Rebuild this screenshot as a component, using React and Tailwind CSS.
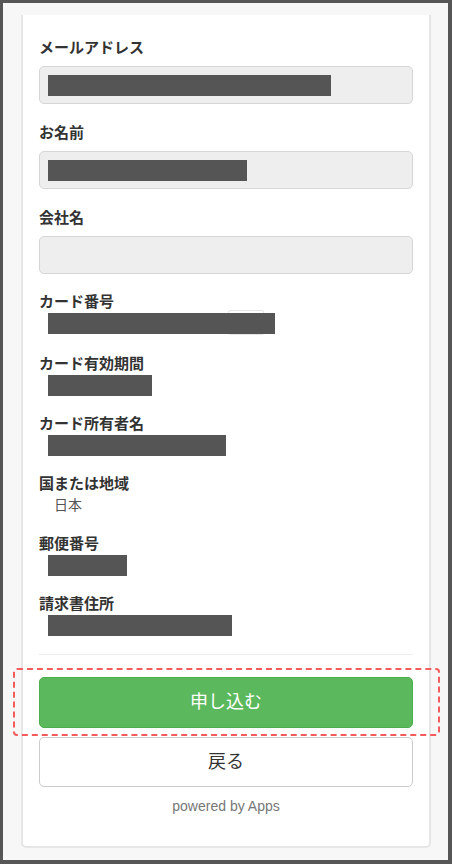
import React from 'react';

const font = { fontFamily: '"Liberation Sans", "Noto Sans CJK JP", sans-serif' };

function Bar({ w }) {
    return <div className="h-[21px] bg-[#555555]" style={{ width: w }} />;
}

function InputField({ label, bar }) {
    return (
        <div className="mb-[19px]">
            <div className="h-5 leading-5 text-[15px] font-bold text-[#333]">{label}</div>
            <div className="mt-2 h-[38px] rounded-[5px] border border-[#d6d6d6] bg-[#eeeeee] flex items-center px-2">
                {bar && <Bar w={bar} />}
            </div>
        </div>
    );
}

function ValueField({ label, bar, text, children, className = 'mb-[18px]' }) {
    return (
        <div className={className}>
            <div className="h-5 leading-5 text-[15px] font-bold text-[#333]">{label}</div>
            <div className="relative h-[22px] pl-[9px] pt-px">
                {children}
                {bar && <div className="relative"><Bar w={bar} /></div>}
                {text && <span className="block pl-[6px] leading-5 text-[14px] text-[#555]">{text}</span>}
            </div>
        </div>
    );
}

export default function App() {
    return (
        <div className="w-[452px] h-[864px] bg-[#f7f7f7] border-[#565656] border-l-[3px] border-t-[3px] border-r-[4px] border-b-[4px] pt-[12px] pl-[18px] pr-[17px]" style={font}>
            <div className="h-[833px] bg-white border-x-2 border-b-2 border-[#e6e6e6] rounded-b-[5px] pt-[23px] px-[16px]">
                <InputField label="メールアドレス" bar={283} />
                <InputField label="お名前" bar={199} />
                <InputField label="会社名" />
                <ValueField label="カード番号" bar={227} className="mb-5 -mt-px">
                    <div className="absolute left-[189px] top-[-2px] w-[36px] h-[25px] bg-white border border-[#e6e6e6] rounded-[2px]" />
                </ValueField>
                <ValueField label="カード有効期間" bar={104} />
                <ValueField label="カード所有者名" bar={178} />
                <ValueField label="国または地域" text="日本" />
                <ValueField label="郵便番号" bar={79} />
                <ValueField label="請求書住所" bar={184} />

                <div className="h-px bg-[#eeeeee] mt-[3px]" />

                <div className="relative mt-[22px]">
                    <div className="absolute -top-[9px] -bottom-[8px] -left-[26px] -right-[27px] border-2 border-dashed border-[#f45b5b] rounded-[4px]" />
                    <button className="w-full h-[51px] rounded-[5px] bg-[#5cb85c] border border-[#4cae4c] text-white text-[18px]">
                        申し込む
                    </button>
                </div>
                <button className="mt-[9px] w-full h-[50px] rounded-[5px] bg-white border border-[#cccccc] text-[#333] text-[18px]">
                    戻る
                </button>
                <div className="mt-[9px] text-center text-[14px] text-[#777]">powered by Apps</div>
            </div>
        </div>
    );
}
